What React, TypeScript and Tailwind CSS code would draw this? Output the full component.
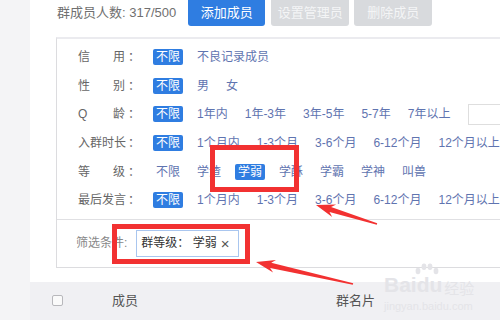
import React from 'react';

type Row = {
  label: string[];
  options: string[];
  selected: number;
  extraInput?: boolean;
};

const rows: Row[] = [
  { label: ['信', '用'], options: ['不限', '不良记录成员'], selected: 0 },
  { label: ['性', '别'], options: ['不限', '男', '女'], selected: 0 },
  { label: ['Q', '龄'], options: ['不限', '1年内', '1年-3年', '3年-5年', '5-7年', '7年以上'], selected: 0, extraInput: true },
  { label: ['入', '群', '时', '长'], options: ['不限', '1个月内', '1-3个月', '3-6个月', '6-12个月', '12个月以上'], selected: 0 },
  { label: ['等', '级'], options: ['不限', '学渣', '学弱', '学酥', '学霸', '学神', '叫兽'], selected: 2 },
  { label: ['最', '后', '发', '言'], options: ['不限', '1个月内', '1-3个月', '3-6个月', '6-12个月', '12个月以上'], selected: 0 },
];

// tapered annotation arrow, tip -> tail
const arrowPoints = (tx: number, ty: number, ex: number, ey: number) => {
  const dx = ex - tx;
  const dy = ey - ty;
  const len = Math.sqrt(dx * dx + dy * dy);
  const ux = dx / len;
  const uy = dy / len;
  const nx = -uy;
  const ny = ux;
  const head = 19;
  const hw = 6.5;
  const neck = 15;
  const sw = 2.6;
  const p = (d: number, w: number) => `${(tx + ux * d + nx * w).toFixed(1)},${(ty + uy * d + ny * w).toFixed(1)}`;
  return [
    p(0, 0),
    p(head, hw),
    p(neck, sw),
    p(len, 0.8),
    p(len, -0.8),
    p(neck, -sw),
    p(head, -hw),
  ].join(' ');
};

export default function App() {
  return (
    <div className="relative flex w-[500px] h-[320px] overflow-hidden bg-white font-['Liberation_Sans','Noto_Sans_CJK_SC',sans-serif]">
      <div className="w-[30px] shrink-0 bg-[#f4f4f6]" />
      <div className="flex flex-col flex-1 min-w-0">
        {/* toolbar */}
        <div className="flex items-center h-[26px] pl-[27px] shrink-0">
          <span className="text-[13px] text-[#707070] whitespace-nowrap">群成员人数: 317/500</span>
          <button className="ml-[12px] w-[77px] h-[26px] rounded-b-[3px] bg-[#2f7de1] text-white text-[13px] shrink-0">添加成员</button>
          <button className="ml-[6px] w-[78px] h-[26px] rounded-b-[3px] bg-[#d8dadd] text-[#f4f5f6] text-[13px] shrink-0">设置管理员</button>
          <button className="ml-[5px] w-[78px] h-[26px] rounded-b-[3px] bg-[#d8dadd] text-[#f4f5f6] text-[13px] shrink-0">删除成员</button>
        </div>

        {/* filter panel */}
        <div className="mt-[11px] ml-[26px] w-[600px] shrink-0 border-l border-l-[#dcdcdf] border-t-2 border-t-[#ebebef] border-b border-b-[#dcdcdf]">
          <div className="pt-[4px] pb-[4px]">
            {rows.map((row, ri) => (
              <div key={ri} className="flex items-center h-[28.6px] pl-[21px] text-[12px] whitespace-nowrap">
                <div className="flex items-center w-[75px] shrink-0 text-[#666]">
                  <div className="flex justify-between w-[47px]">
                    {row.label.map((c, i) => (
                      <span key={i}>{c}</span>
                    ))}
                  </div>
                  <span className="ml-[3px]">：</span>
                </div>
                <div className="flex items-center gap-[11px]">
                  {row.options.map((o, oi) => (
                    <span
                      key={oi}
                      className={
                        oi === row.selected
                          ? 'px-[3px] h-[16px] leading-[16px] rounded-[2px] bg-[#2f7de1] text-white'
                          : 'px-[3px] h-[16px] leading-[16px] text-[#5f74b0]'
                      }
                    >
                      {o}
                    </span>
                  ))}
                  {row.extraInput && <div className="ml-[4px] w-[60px] h-[21px] border border-[#dedede] bg-white" />}
                </div>
              </div>
            ))}
          </div>
          <div className="border-t border-[#e0e0e3]" />
          <div className="flex items-center h-[47px] pl-[19px] text-[12px] whitespace-nowrap">
            <span className="text-[#888]">筛选条件:</span>
            <div className="ml-[9px] flex items-center h-[27px] w-[103px] pl-[4px] border border-[#a9c6ef] bg-white text-[#333]">
              <span>群等级： 学弱</span>
              <span className="ml-[4px] text-[15px] leading-none text-[#555]">×</span>
            </div>
          </div>
        </div>

        {/* table header */}
        <div className="mt-[14px] flex items-center h-[38px] pl-[22px] bg-[#f0f0f3] text-[13px] text-[#555] shrink-0 whitespace-nowrap">
          <div className="w-[11px] h-[11px] border border-[#b8b8bc] rounded-[2px] bg-[#fafafa]" />
          <span className="ml-[49px]">成员</span>
          <span className="ml-[198px]">群名片</span>
        </div>
      </div>

      {/* watermark */}
      <div className="absolute left-[384px] top-[263px] flex flex-col items-start text-[#e4e4e8] pointer-events-none">
        <svg className="ml-[29px]" width="27" height="13" viewBox="0 0 27 13">
          <ellipse cx="5" cy="8" rx="2.4" ry="3.2" fill="#e4e4e8" />
          <ellipse cx="11" cy="3.8" rx="2.4" ry="3.2" fill="#e4e4e8" />
          <ellipse cx="17" cy="3.8" rx="2.4" ry="3.2" fill="#e4e4e8" />
          <ellipse cx="23" cy="8" rx="2.4" ry="3.2" fill="#e4e4e8" />
        </svg>
        <div className="-mt-[2px] flex items-end leading-none">
          <span className="text-[21px] font-bold font-['Liberation_Sans',sans-serif]">Baidu</span>
          <span className="ml-[2px] text-[15px] font-['Noto_Sans_CJK_SC',sans-serif]">经验</span>
        </div>
        <span className="mt-[3px] text-[11px] font-['Liberation_Sans',sans-serif]">jingyan.baidu.com</span>
      </div>

      {/* annotations */}
      <div className="absolute left-[210px] top-[145px] w-[89px] h-[47px] border-[5px] border-[#f23131]" />
      <div className="absolute left-[112px] top-[224px] w-[138px] h-[40px] border-[5px] border-[#f23131]" />
      <svg className="absolute left-0 top-0 pointer-events-none" width="500" height="320" viewBox="0 0 500 320">
        <polygon points={arrowPoints(316, 205, 377, 224)} fill="#f23131" />
        <polygon points={arrowPoints(256, 262, 353, 284)} fill="#f23131" />
      </svg>
    </div>
  );
}
